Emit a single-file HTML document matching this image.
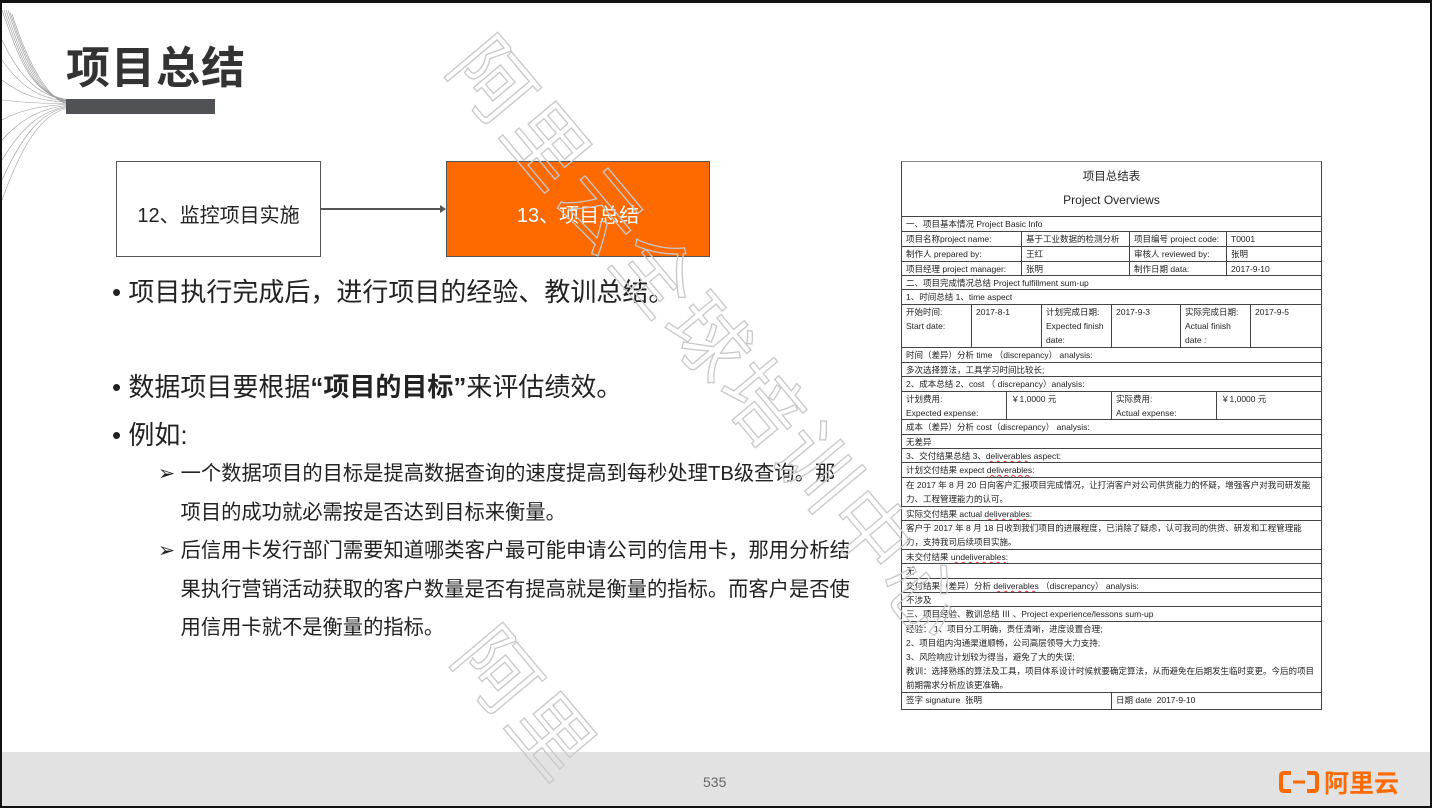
<!DOCTYPE html>
<html><head><meta charset="utf-8"><style>
*{margin:0;padding:0;box-sizing:border-box}
html,body{width:1432px;height:808px;overflow:hidden}
body{position:relative;background:#fff;font-family:"Liberation Sans","Noto Sans CJK SC",sans-serif;color:#222}
.frame{position:absolute;inset:0;border:2px solid #111;border-top-width:3px;z-index:50;pointer-events:none}
.abs{position:absolute}
.title{left:66px;top:32px;font-size:44px;font-weight:bold;color:#333;letter-spacing:1px}
.bar{left:66px;top:99px;width:149px;height:15px;background:#505256}
.box1{left:116px;top:161px;width:205px;height:96px;border:1px solid #555;font-size:20px;display:flex;align-items:center;justify-content:center;color:#222;padding-top:8px}
.box2{left:446px;top:161px;width:264px;height:96px;background:#ff6a00;border:1px solid #555;font-size:20px;color:#fff;display:flex;align-items:center;justify-content:center;padding-top:8px}
.b{font-size:26px;color:#222;left:112px}
.s{font-size:20.3px;color:#222;left:158px;line-height:38.5px}
.wmc{position:absolute;left:0;top:0;width:1432px;height:808px;overflow:hidden;z-index:5;pointer-events:none}
.wm{position:absolute;font-size:80px;line-height:90px;color:rgba(255,255,255,0);-webkit-text-stroke:1.3px #c8c8c8;transform-origin:0 0;white-space:nowrap;letter-spacing:4px}
.tbl{left:901px;top:161px;width:421px;font-size:8.5px;color:#222;border:1px solid #444;border-top:1px solid #888;z-index:2;background:#fff}
.r{display:flex;border-bottom:1px solid #444;height:15px;overflow:hidden}
.r:last-child{border-bottom:none}
.r>div{padding:0 4px;line-height:14px;border-right:1px solid #444;overflow:hidden;white-space:normal}
.r>div:last-child{border-right:none;flex:1}
.u{text-decoration:underline wavy #d33;text-decoration-thickness:1px}
.foot{left:0;top:752px;width:1432px;height:56px;background:#e2e2e2}
</style></head><body>
<svg class="abs" style="left:0;top:0" width="140" height="200" viewBox="0 0 140 200">
<g stroke="#9a9a9a" stroke-width="0.6" fill="none">
<path d="M2 10 C20 60 30 95 70 100"/><path d="M4 10 C22 62 34 97 70 101"/><path d="M6 10 C24 64 38 98 70 102"/><path d="M8 10 C26 66 42 99 70 103"/><path d="M10 12 C28 68 46 100 70 104"/><path d="M12 14 C30 70 50 101 70 105"/>
<path d="M2 200 C20 150 40 112 70 108"/><path d="M2 180 C20 140 40 110 70 107"/><path d="M2 160 C20 130 40 110 70 106"/><path d="M2 140 C20 120 40 108 70 105"/><path d="M2 120 C20 110 40 106 70 104"/><path d="M2 100 C20 102 40 104 70 103"/><path d="M2 80 C20 94 40 102 70 102"/><path d="M2 60 C20 86 40 100 70 101"/><path d="M2 40 C20 78 40 98 70 100"/>
</g></svg>
<div class="abs title">项目总结</div>
<div class="abs bar"></div>
<div class="abs box1">12、监控项目实施</div>
<div class="abs" style="left:321px;top:208px;width:122px;height:2px;background:#555"></div>
<div class="abs" style="left:440px;top:205px;width:0;height:0;border-left:6px solid #555;border-top:4px solid transparent;border-bottom:4px solid transparent"></div>
<div class="abs box2">13、项目总结</div>
<div class="abs b" style="top:272px">•&nbsp;项目执行完成后，进行项目的经验、教训总结。</div>
<div class="abs b" style="top:367px">•&nbsp;数据项目要根据<b>“项目的目标”</b>来评估绩效。</div>
<div class="abs b" style="top:415px">•&nbsp;例如:</div>
<div class="abs s" style="top:455px">➢ 一个数据项目的目标是提高数据查询的速度提高到每秒处理TB级查询。那<br>&nbsp;&nbsp;&nbsp;&nbsp;项目的成功就必需按是否达到目标来衡量。</div>
<div class="abs s" style="top:532px">➢ 后信用卡发行部门需要知道哪类客户最可能申请公司的信用卡，那用分析结<br>&nbsp;&nbsp;&nbsp;&nbsp;果执行营销活动获取的客户数量是否有提高就是衡量的指标。而客户是否使<br>&nbsp;&nbsp;&nbsp;&nbsp;用信用卡就不是衡量的指标。</div>

<div class="abs tbl">
<div style="height:55px;border-bottom:1px solid #444;text-align:center"><div style="font-size:11.5px;padding-top:6px">项目总结表</div><div style="font-size:12px;padding-top:9px">Project Overviews</div></div>
<div class="r"><div>一、项目基本情况 Project Basic Info</div></div>
<div class="r"><div style="width:120px">项目名称project name:</div><div style="width:108px">基于工业数据的检测分析</div><div style="width:97px">项目编号 project code:</div><div>T0001</div></div>
<div class="r"><div style="width:120px">制作人 prepared by:</div><div style="width:108px">王红</div><div style="width:97px">审核人 reviewed by:</div><div>张明</div></div>
<div class="r" style="height:14px"><div style="width:120px">项目经理 project manager:</div><div style="width:108px">张明</div><div style="width:97px">制作日期 data:</div><div>2017-9-10</div></div>
<div class="r" style="height:14px"><div>二、项目完成情况总结 Project fulfillment sum-up</div></div>
<div class="r"><div>1、时间总结 1、time aspect</div></div>
<div class="r" style="height:43px"><div style="width:70px">开始时间:<br>Start date:</div><div style="width:70px">2017-8-1</div><div style="width:70px">计划完成日期:<br>Expected finish date:</div><div style="width:69px">2017-9-3</div><div style="width:70px">实际完成日期:<br>Actual finish<br>date :</div><div>2017-9-5</div></div>
<div class="r"><div>时间（差异）分析 time （discrepancy） analysis:</div></div>
<div class="r" style="height:14px"><div>多次选择算法，工具学习时间比较长;</div></div>
<div class="r"><div>2、成本总结 2、cost （ discrepancy）analysis:</div></div>
<div class="r" style="height:28px"><div style="width:105px">计划费用:<br>Expected expense:</div><div style="width:105px">￥1,0000 元</div><div style="width:105px">实际费用:<br>Actual expense:</div><div>￥1,0000 元</div></div>
<div class="r"><div>成本（差异）分析 cost（discrepancy） analysis:</div></div>
<div class="r" style="height:14px"><div>无差异</div></div>
<div class="r" style="height:14px"><div>3、交付结果总结 3、<span class="u">deliverables</span> aspect:</div></div>
<div class="r"><div>计划交付结果 expect <span class="u">deliverables</span>:</div></div>
<div class="r" style="height:29px"><div>在 2017 年 8 月 20 日向客户汇报项目完成情况，让打消客户对公司供货能力的怀疑，增强客户对我司研发能力、工程管理能力的认可。</div></div>
<div class="r" style="height:14px"><div>实际交付结果 actual <span class="u">deliverables</span>:</div></div>
<div class="r" style="height:29px"><div>客户于 2017 年 8 月 18 日收到我们项目的进展程度，已消除了疑虑，认可我司的供货、研发和工程管理能力，支持我司后续项目实施。</div></div>
<div class="r" style="height:14px"><div>未交付结果 <span class="u">undeliverables</span>:</div></div>
<div class="r"><div>无</div></div>
<div class="r" style="height:14px"><div>交付结果（差异）分析 <span class="u">deliverables</span> （discrepancy） analysis:</div></div>
<div class="r" style="height:14px"><div>不涉及</div></div>
<div class="r"><div>三、项目经验、教训总结 Ⅲ 、Project experience/lessons sum-up</div></div>
<div class="r" style="height:71px"><div>经验： 1、项目分工明确，责任清晰，进度设置合理;<br>2、项目组内沟通渠道顺畅，公司高层领导大力支持;<br>3、风险响应计划较为得当，避免了大的失误;<br>教训：选择熟练的算法及工具，项目体系设计时候就要确定算法，从而避免在后期发生临时变更。今后的项目前期需求分析应该更准确。</div></div>
<div class="r" style="height:16px"><div style="width:210px">签字 signature &nbsp;张明</div><div>日期 date &nbsp;2017-9-10</div></div>
</div>

<div class="abs foot"></div>
<div class="abs" style="left:703px;top:774px;font-size:14px;color:#666">535</div>
<div class="abs" style="left:1278px;top:764px;font-size:25px;font-weight:bold;color:#ff6a00;display:flex;align-items:center;gap:4px">
<svg width="42" height="24" viewBox="0 0 42 24"><g fill="none" stroke="#ff6a00" stroke-width="4"><path d="M13 3H6Q3 3 3 6V18Q3 21 6 21H13"/><path d="M29 3H36Q39 3 39 6V18Q39 21 36 21H29"/></g><rect x="15" y="10.5" width="12" height="3" fill="#ff6a00"/></svg>
<span>阿里云</span></div>

<div class="wmc">
<div class="wm" style="left:500px;top:22px;transform:rotate(50deg)">阿里云全球培训中心</div>
<div class="wm" style="left:505px;top:612px;transform:rotate(50deg)">阿里</div>
</div>
<div class="frame"></div>
</body></html>
